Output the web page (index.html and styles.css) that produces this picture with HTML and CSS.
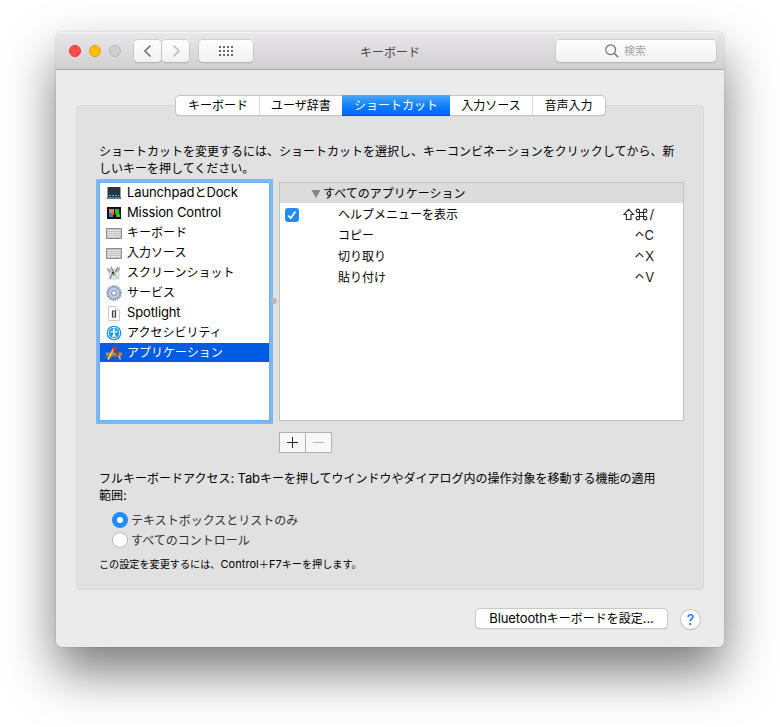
FILE: index.html
```
<!DOCTYPE html>
<html lang="ja">
<head>
<meta charset="utf-8">
<title>キーボード</title>
<link rel="stylesheet" href="styles.css">
</head>
<body>
<main class="window">
  <header class="titlebar">
    <div class="lights"><i class="light red"></i><i class="light yellow"></i><i class="light off"></i></div>
    <div class="nav">
      <button class="tool" aria-label="戻る"><svg width="10" height="14" viewBox="0 0 10 14"><path d="M7.5 1.5 2 7l5.500 5.500" fill="none" stroke="#737373" stroke-width="1.700"/></svg></button>
      <button class="tool" aria-label="進む"><svg width="10" height="14" viewBox="0 0 10 14"><path d="M2.500 1.500 8 7l-5.500 5.500" fill="none" stroke="#bcbcbc" stroke-width="1.700"/></svg></button>
    </div>
    <button class="tool all" aria-label="すべてを表示"><svg width="14" height="10" viewBox="0 0 14 10"><path d="M0 1h14M0 5h14M0 9h14" stroke="#686868" stroke-width="2" stroke-dasharray="2 2"/></svg></button>
    <h1 class="title">キーボード</h1>
    <div class="search"><svg width="14" height="14" viewBox="0 0 14 14"><circle cx="5.700" cy="5.700" r="4.900" fill="none" stroke="#727272" stroke-width="1.200"/><path d="m9.200 9.200 4 4" stroke="#727272" stroke-width="1.400"/></svg><span>検索</span></div>
  </header>

  <section class="panel">
    <nav class="tabs">
      <span class="tab t1">キーボード</span><span class="tab t2">ユーザ辞書</span><span class="tab t3 active">ショートカット</span><span class="tab t4">入力ソース</span><span class="tab t5">音声入力</span>
    </nav>
    <p class="intro">ショートカットを変更するには、ショートカットを選択し、キーコンビネーションをクリックしてから、新<br>しいキーを押してください。</p>
    <div class="split">
      <ul class="list">
        <li><svg class="icon" viewBox="0 0 16 16"><path d="M1.500 2h13v10h-13z" fill="#2d3438"/><path d="M1 12h14v2H1z" fill="#68777e"/><path d="M2 9h12v3H2z" fill="#163e51"/><path d="M3 10.500h10" stroke="#39b9ee" stroke-dasharray="2 1"/></svg><span><b>Launchpad</b>と<b>Dock</b></span></li>
        <li><svg class="icon" viewBox="0 0 16 16"><path d="M1 2h14v12H1z" fill="#111"/><path d="M3 4h5v4H3z" fill="#e8913a"/><path d="M9 4h4v5H9z" fill="#22c234"/><path d="M3 8h4v4H3z" fill="#2f7fe0"/><path d="M6 7h2v3H6z" fill="#f05a24"/><path d="M10 9h4v3h-4z" fill="#48b82a"/></svg><span><b>Mission Control</b></span></li>
        <li><svg class="icon" viewBox="0 0 16 16"><path d="M.5 3.500h15v10H.5z" fill="#c2c2c2" stroke="#8c8c8c"/><path d="M1.500 5.500h13M2 7.500h12.500M1.500 9.500h13" stroke="#f1f1f1" stroke-dasharray="1.500 .5"/><path d="M2 11.500h2m1 0h6m1 0h2" stroke="#eee"/></svg><span>キーボード</span></li>
        <li><svg class="icon" viewBox="0 0 16 16"><path d="M.5 3.500h15v10H.5z" fill="#c2c2c2" stroke="#8c8c8c"/><path d="M1.500 5.500h13M2 7.500h12.500M1.500 9.500h13" stroke="#f1f1f1" stroke-dasharray="1.500 .5"/><path d="M2 11.500h2m1 0h6m1 0h2" stroke="#eee"/></svg><span>入力ソース</span></li>
        <li><svg class="icon" viewBox="0 0 16 16"><path d="M3 4h10v10H3z" fill="#e6e6e6" stroke="#c4c4c4" stroke-width=".7"/><path d="m1 2.500 5 3-2 2.500-3-2zM14 1.500 9 6l3 1.500 2-3z" fill="#b4b6b4"/><path d="m5 2 2.500 5M12 2 9 7.500M6.500 8 4 14" fill="none" stroke="#808480" stroke-width="1.200"/><path d="m9 9 2 4" stroke="#b7bab7"/><circle cx="7" cy="8" r="1.300" fill="#33433a"/><path d="M7 9h2v1.500H7z" fill="#60aa80"/></svg><span>スクリーンショット</span></li>
        <li><svg class="icon" viewBox="0 0 16 16"><circle cx="8" cy="8" r="6.900" fill="none" stroke="#7f8ea8" stroke-width="1.700" stroke-dasharray="1.450 .718"/><circle cx="8" cy="8" r="6" fill="#aebcd5" stroke="#7f8faa" stroke-width=".7"/><circle cx="8" cy="8" r="4.100" fill="none" stroke="#c6d2e7" stroke-width="1.500"/><circle cx="8" cy="8" r="2.300" fill="#fff" stroke="#7584a0" stroke-width=".9"/></svg><span>サービス</span></li>
        <li><svg class="icon" viewBox="0 0 16 16"><path d="M2.500 1.500h7l4 4v10h-11z" fill="#fff" stroke="#c8c8c8"/><path d="M9.500 1.500v4h4" fill="#f4f4f4" stroke="#c5c5c5" stroke-width=".8"/><path d="M6.500 6h3v6h-3z" fill="none" stroke="#444" stroke-width="1.200"/><path d="M8 7.500v3" stroke="#999"/></svg><span><b>Spotlight</b></span></li>
        <li><svg class="icon" viewBox="0 0 16 16"><circle cx="8" cy="8" r="7.300" fill="#1187e6"/><circle cx="8" cy="8" r="5.700" fill="#199aef" stroke="#e4f5ff" stroke-width="1"/><circle cx="8" cy="4.800" r="1.200" fill="#fff"/><path d="M4.500 6.900h7M8 6.500v3.400M8 9l-1.500 3.200M8 9l1.500 3.200" stroke="#fff" stroke-width="1.400"/></svg><span>アクセシビリティ</span></li>
        <li class="selected"><svg class="icon" viewBox="0 0 16 16"><path d="M0 7.500h16v4H0z" fill="#b58a58"/><path d="M0 11h16" stroke="#76543a" stroke-width=".8"/><path d="M8 3 3.500 12" stroke="#f0c845" stroke-width="2"/><path d="M3.500 11.500 2 14.500" stroke="#f3d31c" stroke-width="2"/><path d="m7.500 2 5 9" stroke="#98382a" stroke-width="2"/><path d="m12.500 10.500 2 4" stroke="#c4c4c4" stroke-width="1.500"/><path d="m10 1.500-2.500 4.500" stroke="#e53322" stroke-width="2.200"/></svg><span>アプリケーション</span></li>
      </ul>
      <i class="grip"></i>
      <div class="table">
        <div class="group"><svg width="10" height="8" viewBox="0 0 10 8"><path d="M.5 0h9L5 8z" fill="#858585"/></svg><span>すべてのアプリケーション</span></div>
        <div class="row"><span class="check"><svg width="14" height="14" viewBox="0 0 14 14"><path d="m3.300 7.500 2.400 2.700 4.700-6.700" fill="none" stroke="#fff" stroke-width="1.700"/></svg></span><span class="name">ヘルプメニューを表示</span><span class="keys"><svg width="25" height="13" viewBox="0 0 25 13" class="mods"><path d="M5.700 1.300 10.500 6.500H8v5H3.400v-5H.9z"/><path d="M16.500 4.500h4v4h-4zM16.500 4.500h-1.700a1.700 1.700 0 1 1 1.700-1.700zm4 0V2.800a1.700 1.700 0 1 1 1.700 1.700zm0 4h1.700a1.700 1.700 0 1 1-1.700 1.700zm-4 0v1.700a1.700 1.700 0 1 1-1.700-1.700z"/></svg><b>/</b></span></div>
        <div class="row"><span class="check none"></span><span class="name">コピー</span><span class="keys"><svg class="ctrl" width="9" height="12" viewBox="0 0 9 12"><path d="m.8 6 3.700-3.800L8.200 6"/></svg><b>C</b></span></div>
        <div class="row"><span class="check none"></span><span class="name">切り取り</span><span class="keys"><svg class="ctrl" width="9" height="12" viewBox="0 0 9 12"><path d="m.8 6 3.700-3.800L8.200 6"/></svg><b>X</b></span></div>
        <div class="row"><span class="check none"></span><span class="name">貼り付け</span><span class="keys"><svg class="ctrl" width="9" height="12" viewBox="0 0 9 12"><path d="m.8 6 3.700-3.800L8.200 6"/></svg><b>V</b></span></div>
      </div>
    </div>
    <div class="edit">
      <button aria-label="追加"><svg width="13" height="13" viewBox="0 0 13 13"><path d="M1 6.500h11M6.500 1v11" stroke="#222"/></svg></button><button aria-label="削除"><svg width="13" height="13" viewBox="0 0 13 13"><path d="M1 6.500h11" stroke="#b5b5b5"/></svg></button>
    </div>
    <p class="access">フルキーボードアクセス<b>: Tab</b>キーを押してウインドウやダイアログ内の操作対象を移動する機能の適用<br>範囲<b>:</b></p>
    <div class="radios">
      <div class="radio"><i class="dot on"></i><span>テキストボックスとリストのみ</span></div>
      <div class="radio"><i class="dot"></i><span>すべてのコントロール</span></div>
    </div>
    <p class="note">この設定を変更するには、<b>Control</b>＋<b>F7</b>キーを押します。</p>
  </section>

  <footer class="footer">
    <button class="bluetooth"><b>Bluetooth</b>キーボードを設定<b>...</b></button>
    <button class="help">?</button>
  </footer>
</main>
</body>
</html>
```
FILE: styles.css
```
* { box-sizing: border-box; }
body {
  margin: 0;
  padding: 32px 56px 80px;
  height: 727px;
  overflow: hidden;
  background: #fff;
  color: #000;
  font: 12px/17px Inter, "Noto Sans CJK JP", sans-serif;
  font-feature-settings: "calt" 0;
}
p, h1, ul { margin: 0; padding: 0; }
b { font-weight: 400; font-size: 13px; letter-spacing: -.12px; line-height: 1; }
button { font: inherit; color: inherit; padding: 0; margin: 0; border: 0; }
svg { display: block; flex: none; }
span { white-space: nowrap; }

.window {
  width: 668px;
  height: 615px;
  background: #ebebeb;
  border-radius: 5px;
  box-shadow: 0 0 1px rgba(0,0,0,.5), 0 25px 50px rgba(0,0,0,.52);
}
.titlebar {
  display: flex;
  align-items: center;
  height: 38px;
  padding: 0 8px 0 13px;
  border-bottom: 1px solid #acaaac;
  border-radius: 5px 5px 0 0;
  background: linear-gradient(#e9e7e9, #d1cfd1);
  box-shadow: inset 0 1px #f5f4f5;
}
.lights { display: flex; gap: 8px; width: 65px; }
.light { width: 12px; height: 12px; border-radius: 50%; border: 1px solid; }
.red { background: #ff4c45; border-color: #e63930; }
.yellow { background: #ffbe00; border-color: #e2a000; }
.off { background: #cfcecf; border-color: #b8b6b8; }
.nav { display: flex; gap: 1px; }
.tool, .search {
  display: flex;
  align-items: center;
  justify-content: center;
  height: 22px;
  border-radius: 4px;
  background: linear-gradient(#fefefe, #f1f1f1);
  box-shadow: 0 0 0 .5px #bcbabc, 0 1px 1px #a9a7a9;
}
.nav .tool { width: 27px; }
.tool.all { width: 54px; margin-left: 10px; }
.title { flex: 1; padding: 3px 29px 0 0; text-align: center; font-size: 12px; font-weight: 400; color: #464546; }
.search { width: 160px; gap: 5px; padding-right: 21px; color: #a5a5a5; font-size: 11px; }
.search span { padding-top: 2px; }

.panel {
  width: 628px;
  height: 485px;
  margin: 35px 0 0 20px;
  padding: 0 19px 0 22px;
  border: 1px solid #d8d8d8;
  border-radius: 4px;
  background: #e1e1e1;
}
.tabs {
  display: flex;
  width: 429px;
  height: 19px;
  margin: -10px 0 0 77px;
  border-radius: 4px;
  background: #fff;
  box-shadow: 0 0 0 1px #c5c5c5, 0 1px 1px #9f9f9f;
}
.tab { display: flex; align-items: center; justify-content: center; border-right: 1px solid #ddd; }
.t1 { width: 84px; padding-left: 1px; }
.t2 { width: 82px; border: 0; }
.t3 { width: 108px; }
.t4 { width: 83px; }
.t5 { width: 72px; border: 0; padding-right: 1px; }
.tab.active { height: 21px; margin-top: -1px; border: 0; color: #fff; background: linear-gradient(#4ba7fb, #087aff 60%, #0065ff); box-shadow: inset 0 -1px #1644e8; }
.intro { margin-top: 28px; height: 34px; white-space: nowrap; }
.split { display: flex; margin-top: 5px; height: 239px; }
.list {
  list-style: none;
  width: 171px;
  height: 239px;
  border: 1px solid #6faceb;
  background: #fff;
  box-shadow: 0 0 0 3px #7fb7f2;
  padding: 0;
}
.list li { display: flex; align-items: center; gap: 5px; height: 19px; margin-bottom: 1px; padding-left: 6px; }
.list .selected { color: #fff; background: #005ce3; }
.icon { width: 16px; height: 16px; margin-top: 1px; }
.grip { width: 6px; height: 6px; margin: 116px 2px 0 1px; border-radius: 50%; background: #b9b9b9; }
.table { width: 405px; height: 239px; background: #fff; border: 1px solid #c1c1c1; }
.group { display: flex; align-items: center; gap: 2px; height: 20px; padding: 1px 0 0 31px; background: #dcdcdc; }
.row { display: flex; align-items: center; height: 21px; padding: 2px 29px 0 5px; }
.check { width: 14px; height: 14px; margin-top: 1px; border-radius: 3px; background: #218dfd; }
.check.none { background: none; }
.name { flex: 1; padding-left: 39px; }
.keys { display: flex; align-items: center; color: #222; }
.mods { margin-right: 1px; }
.mods path, .ctrl path { fill: none; stroke: #222; stroke-width: 1.1; }
.ctrl { margin-right: 1px; }
.edit { display: flex; width: 53px; height: 21px; margin: 11px 0 0 180px; border: 1px solid #b1b1b1; background: #f8f8f8; }
.edit button { display: flex; align-items: center; justify-content: center; width: 25px; background: none; }
.edit button + button { width: 26px; border-left: 1px solid #b1b1b1; }
.access { height: 34px; margin-top: 17px; white-space: nowrap; }
.radios { margin: 6px 0 0 13px; }
.radio { display: flex; align-items: center; height: 20px; gap: 3px; color: #333; }
.dot { width: 16px; height: 16px; border: 1px solid #b8b8b8; border-radius: 50%; background: #fff; }
.dot.on { border: 5px solid #218dfd; }
.note { margin-top: 6px; font-size: 10.15px; line-height: 16px; white-space: nowrap; }
.note b { font-size: 11px; letter-spacing: 0.05px; }

.footer { display: flex; margin: 19px 23px 0 420px; gap: 14px; }
.bluetooth { width: 191px; height: 19px; line-height: 19px; border-radius: 3.5px; background: #fff; white-space: nowrap; box-shadow: 0 0 0 1px #c8c8c8, 0 1px 1px #999; }
.help { width: 19px; height: 19px; margin-top: 1px; border-radius: 50%; background: #fff; color: #087aff; font: 500 14px/19px Inter, sans-serif; box-shadow: 0 0 0 1px #c8c8c8, 0 1px 1px #999; }
```
